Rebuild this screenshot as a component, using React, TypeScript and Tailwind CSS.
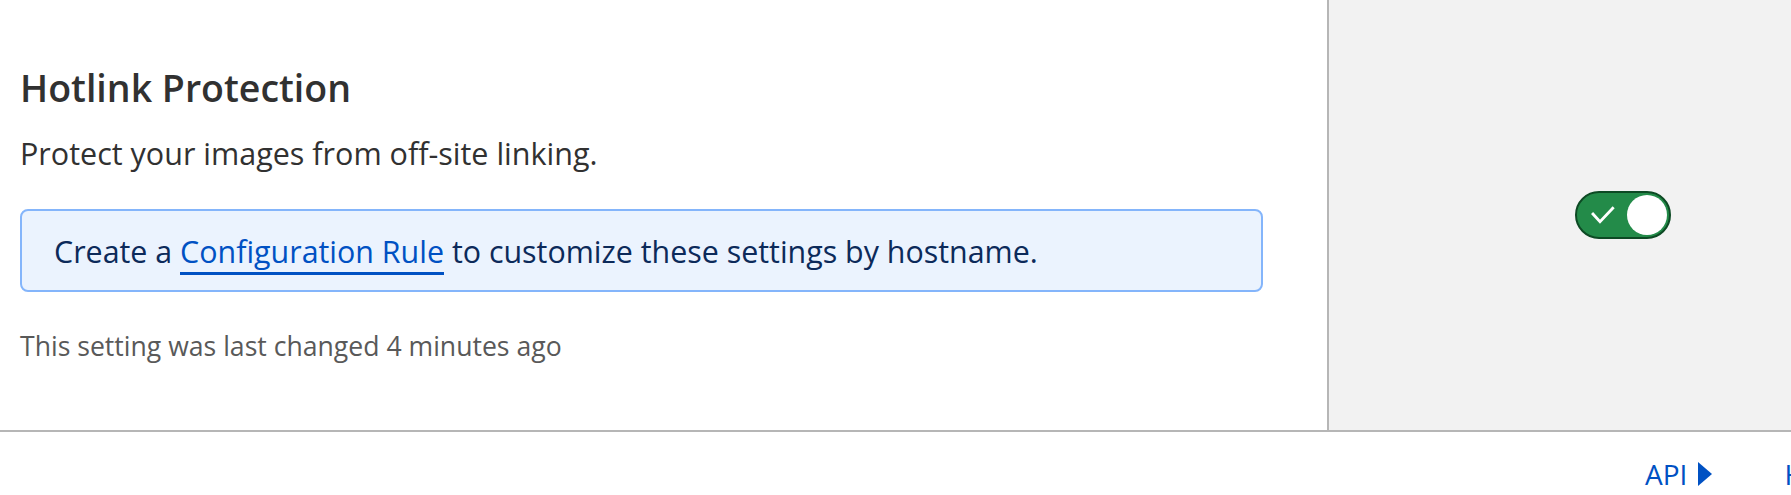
import React from "react"

function Toggle() {
  return (
    <button
      type="button"
      role="switch"
      aria-checked="true"
      className="flex h-[48px] w-[96px] items-center justify-between rounded-full border-2 border-[#0d4a24] bg-[#238b49] pl-[14px] pr-[2px]"
    >
      <svg width="24" height="18" viewBox="0 0 24 18" fill="none" aria-hidden="true">
        <path d="M2 8l7 7.7L21.7 2.3" stroke="#ffffff" strokeWidth="2.8" strokeLinecap="square" />
      </svg>
      <span className="h-[40px] w-[40px] rounded-full bg-white" />
    </button>
  )
}

function FooterLink({ label }: { label: string }) {
  return (
    <a href="#" className="flex items-center text-[28px] leading-[36px] text-[#0051c3]">
      {label}
      <svg width="14" height="24" viewBox="0 0 14 24" className="ml-[11px]" aria-hidden="true">
        <path d="M0 0L14 12L0 24Z" fill="#0051c3" />
      </svg>
    </a>
  )
}

export default function App() {
  return (
    <div className="h-screen w-full overflow-hidden bg-white font-['Open_Sans',sans-serif]">
      <div className="w-[1917px]">
        <div className="flex h-[432px] border-b-2 border-[#b6b6b6]">
          <div className="w-[1327px] pl-5 pr-16 pt-[64px]">
            <h2 className="text-[37.5px] font-semibold leading-[48px] text-[#313131]">
              Hotlink Protection
            </h2>
            <p className="mt-[21px] text-[30.5px] leading-[40px] text-[#313131]">
              Protect your images from off-site linking.
            </p>
            <div className="mt-[36px] h-[83px] rounded-lg border-2 border-[#84b5fb] bg-[#ebf3fe] pl-[32px] pt-[21px] text-[30.4px] leading-[40px] text-[#0c2a5a]">
              Create a{" "}
              <a href="#" className="border-b-[3px] border-[#0051c3] text-[#0051c3]">
                Configuration Rule
              </a>{" "}
              to customize these settings by hostname.
            </div>
            <p className="mt-[36px] text-[26.6px] leading-[36px] text-[#595959]">
              This setting was last changed 4 minutes ago
            </p>
          </div>
          <div className="flex w-[590px] items-center justify-center border-l-2 border-[#b6b6b6] bg-[#f2f2f2]">
            <Toggle />
          </div>
        </div>

        <div className="flex justify-end gap-[72px] pr-[47px] pt-[24px]">
          <FooterLink label="API" />
          <FooterLink label="Help" />
        </div>
      </div>
    </div>
  )
}
